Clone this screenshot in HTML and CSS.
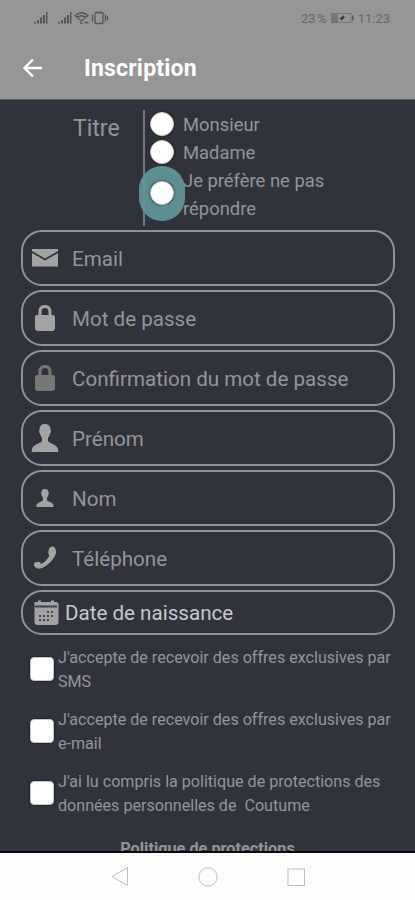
FILE: index.html
```html
<!DOCTYPE html>
<html lang="fr">
<head>
    <meta charset="UTF-8">
    <meta name="viewport" content="width=device-width, initial-scale=1.0">
    <title>Inscription</title>
    <link rel="stylesheet" href="styles.css">
</head>
<body>
    <div class="screen">
        <header class="header">
            <div class="status">
                <svg class="status-icons" width="76" height="14" viewBox="0 0 76 14">
                    <g fill="#555">
                        <path d="M1 11h2v1.500H1zM4 9h2v3.500H4zM7 6.500h2v6H7zM10 4h2v8.500h-2zM13 1h1.500v11.500H13z"/>
                        <path d="M25 11h2v1.500h-2zM28 9h2v3.500h-2zM31 6.500h2v6h-2zM34 4h2v8.500h-2zM37 1h1.500v11.500H37z"/>
                    </g>
                    <g fill="none" stroke="#555" stroke-width="1.300">
                        <path d="M42 4.500q6.500-5.500 13 0L48.500 10zM44 6.500q4.500-3.500 9 0"/>
                        <path d="M47 12h2.500M51.500 11.500h4"/>
                        <rect x="62" y="1.500" width="8" height="11" rx="1"/>
                        <path d="M59.500 3.500v7M72.500 3.500v7M74.500 5v4"/>
                    </g>
                </svg>
                <div class="status-right">
                    <span>23&#8239;%</span>
                    <svg width="23" height="10" viewBox="0 0 23 10">
                        <rect x=".5" y=".5" width="19.500" height="9" fill="none" stroke="#747474"/>
                        <path d="M1 1h6v8H1z" fill="#777"/>
                        <path d="M8 6l5-4-.500 2.500L15 3l-5 5v-2z" fill="#333"/>
                        <path d="M21 2.500h1.500v5H21z" fill="#555"/>
                    </svg>
                    <span>11:23</span>
                </div>
            </div>
            <div class="toolbar">
                <svg width="20" height="20" viewBox="0 0 20 20">
                    <path d="M19 10H2M10 1.500L1.500 10l8.500 8.500" fill="none" stroke="#fff" stroke-width="2.400"/>
                </svg>
                <h1>Inscription</h1>
            </div>
        </header>

        <main class="form">
            <div class="title-row">
                <span class="title-label">Titre</span>
                <div class="choices">
                    <label class="choice"><span class="radio"></span><span>Monsieur</span></label>
                    <label class="choice"><span class="radio"></span><span>Madame</span></label>
                    <label class="choice pressed"><span class="radio"></span><span>Je préfère ne pas<br>répondre</span></label>
                </div>
            </div>

            <div class="fields">
                <div class="field">
                    <svg width="28" height="28" viewBox="0 0 28 28">
                        <path d="M1 5h26v2l-13 7.500L1 7zM1 9l13 7.500L27 9v13.500H1z"/>
                    </svg>
                    <span>Email</span>
                </div>
                <div class="field">
                    <svg width="28" height="28" viewBox="0 0 28 28">
                        <path d="M7.500 11V7.500C7.500 3 10.500 1 14 1s6.500 2 6.500 6.500V11h1.500q2 0 2 2v11q0 3-3 3H7q-3 0-3-3V13q0-2 2-2zM10.500 11h7V7.500c0-2.500-1.500-3.500-3.500-3.500s-3.500 1-3.500 3.500z"/>
                    </svg>
                    <span>Mot de passe</span>
                </div>
                <div class="field dim">
                    <svg width="28" height="28" viewBox="0 0 28 28">
                        <path d="M7.500 11V7.500C7.500 3 10.500 1 14 1s6.500 2 6.500 6.500V11h1.500q2 0 2 2v11q0 3-3 3H7q-3 0-3-3V13q0-2 2-2zM10.500 11h7V7.500c0-2.500-1.500-3.500-3.500-3.500s-3.500 1-3.500 3.500z"/>
                    </svg>
                    <span>Confirmation du mot de passe</span>
                </div>
                <div class="field">
                    <svg width="28" height="28" viewBox="0 0 28 28">
                        <path d="M14 0c4 0 5.500 2.500 5.500 6 .800 1 .500 2.500-.500 3.500-.300 2.500-1.500 3.500-2 4.500v3c1.500 3 9.500 3 10 8.500l.300 2.500H.700L1 25.500c.500-5.500 8.500-5.500 10-8.500v-3c-.500-1-1.700-2-2-4.500-1-1-1.300-2.500-.500-3.500 0-3.500 1.500-6 5.500-6z"/>
                    </svg>
                    <span>Prénom</span>
                </div>
                <div class="field">
                    <svg width="28" height="28" viewBox="-7.500 -7.500 43 43">
                        <path d="M14 0c4 0 5.500 2.500 5.500 6 .800 1 .500 2.500-.500 3.500-.300 2.500-1.500 3.500-2 4.500v3c1.500 3 9.500 3 10 8.500l.300 2.500H.700L1 25.500c.500-5.500 8.500-5.500 10-8.500v-3c-.500-1-1.700-2-2-4.500-1-1-1.300-2.500-.500-3.500 0-3.500 1.500-6 5.500-6z"/>
                    </svg>
                    <span>Nom</span>
                </div>
                <div class="field">
                    <svg width="28" height="28" viewBox="0 0 28 28">
                        <path d="M19 3.500q3-2 5 .500 3 4-2 11-5 6.500-11 9Q6 26 3.500 22.500 2 20 4 18.500l3-.800q2-.200 3.200 2.200 5-2.400 8.300-8.400Q16.800 10 17.500 7.500q0-3 1.500-4z"/>
                    </svg>
                    <span>Téléphone</span>
                </div>
                <div class="field date">
                    <svg width="28" height="28" viewBox="0 0 28 28">
                        <path d="M4 3h2V1.500h3V3h10V1.500h3V3h2q2.500 0 2.500 2.500V23q0 3-3 3h-18q-3 0-3-3V5.500Q1.500 3 4 3z"/>
                        <path class="cut" d="M3 6.500h22v2H3zM15 12h2v2h-2zM19 12h2v2h-2zM7 16h2v2H7zM11 16h2v2h-2zM15 16h2v2h-2zM19 16h2v2h-2zM7 20h2v2H7zM11 20h2v2h-2zM15 20h2v2h-2z"/>
                    </svg>
                    <span>Date de naissance</span>
                </div>
            </div>

            <div class="consents">
                <label class="consent"><span class="box"></span><span>J'accepte de recevoir des offres exclusives par<br>SMS</span></label>
                <label class="consent"><span class="box"></span><span>J'accepte de recevoir des offres exclusives par<br>e-mail</span></label>
                <label class="consent"><span class="box"></span><span>J'ai lu compris la politique de protections des<br>données personnelles de&nbsp; Coutume</span></label>
            </div>

            <p class="policy">Politique de protections</p>
        </main>

        <nav class="navbar">
            <svg width="20" height="22" viewBox="0 0 20 22"><path d="M17.500 1.500v18L2 10.500z"/></svg>
            <svg width="20" height="22" viewBox="0 0 20 22"><circle cx="10" cy="11" r="9.200"/></svg>
            <svg width="20" height="22" viewBox="0 0 20 22"><rect x="2" y="3" width="16.500" height="16.500"/></svg>
        </nav>
    </div>
</body>
</html>
```
FILE: styles.css
```css
* {
    box-sizing: border-box;
}
body {
    margin: 0;
    font-family: Roboto, Arial, sans-serif;
    background: #31333c;
    color: #94959a;
}
.screen {
    display: flex;
    flex-direction: column;
    width: 415px;
    height: 900px;
    overflow: hidden;
}
.header {
    height: 100px;
    flex: none;
    background: #969696;
    border-bottom: 1px solid #5b5b60;
}
.status {
    display: flex;
    justify-content: space-between;
    align-items: center;
    height: 36px;
    padding: 0 25px 0 33px;
    color: #666;
    font-size: 13px;
}
.status-right {
    display: flex;
    align-items: center;
    gap: 4px;
}
.toolbar {
    display: flex;
    align-items: center;
    gap: 41px;
    height: 64px;
    padding-left: 23px;
}
.toolbar h1 {
    margin: 0;
    color: #fff;
    font-size: 23px;
    font-weight: 700;
    letter-spacing: 0.2px;
}
.form {
    flex: none;
    height: 753px;
    padding-top: 10px;
    overflow: hidden;
    border-bottom: 2px solid #08080c;
}
.title-row {
    display: flex;
    height: 116px;
    margin-bottom: 4px;
}
.title-label {
    width: 143px;
    padding: 5px 0 0 73px;
    font-size: 23px;
    line-height: 28px;
}
.choices {
    border-left: 2px solid #75767b;
    padding: 1px 0 0 5px;
    font-size: 18.4px;
    line-height: 28px;
}
.choice {
    display: flex;
    align-items: center;
    gap: 9px;
    position: relative;
}
.radio {
    flex: none;
    width: 24px;
    height: 24px;
    margin-top: -2px;
    border-radius: 50%;
    background: #fff;
    border: 1px solid #ccc;
    box-shadow: 0 0 2px #111;
}
.pressed .radio {
    position: relative;
    top: -1px;
    z-index: 1;
}
/* touch ripple over the selected radio */
.pressed::after {
    content: "";
    position: absolute;
    left: -11px;
    top: -1px;
    width: 46px;
    height: 55px;
    border-radius: 23px;
    background: rgba(98, 150, 156, 0.92);
}
.fields {
    display: flex;
    flex-direction: column;
    gap: 4px;
    padding: 0 20px 0 21px;
}
.field {
    display: flex;
    align-items: center;
    gap: 13px;
    height: 56px;
    padding-left: 8px;
    border: 2px solid #929397;
    border-radius: 21px;
    font-size: 20.6px;
}
.field span {
    padding-top: 1px;
}
.field svg {
    fill: #a3a3a3;
}
.field.dim svg {
    fill: #777778;
}
.field.date {
    height: 45px;
    gap: 5px;
    padding-left: 9px;
    color: #c6c8cd;
}
.field svg .cut {
    fill: #414249;
}
.consents {
    display: flex;
    flex-direction: column;
    gap: 14px;
    padding: 11px 0 0 30px;
}
.consent {
    display: flex;
    align-items: center;
    gap: 4px;
    font-size: 16.1px;
    line-height: 24px;
}
.box {
    flex: none;
    width: 24px;
    height: 24px;
    margin-top: -2px;
    border-radius: 4px;
    background: #fff;
    border: 1px solid #c4c4c8;
    box-shadow: 0 0 2px #111;
}
.policy {
    margin: 19px 0 0;
    text-align: center;
    font-size: 16.3px;
    font-weight: 700;
    line-height: 24px;
}
.navbar {
    flex: 1;
    display: flex;
    justify-content: center;
    gap: 68px;
    padding-top: 13px;
    background: #fdfdfd;
}
.navbar svg {
    fill: none;
    stroke: #bdbdbd;
}
```
